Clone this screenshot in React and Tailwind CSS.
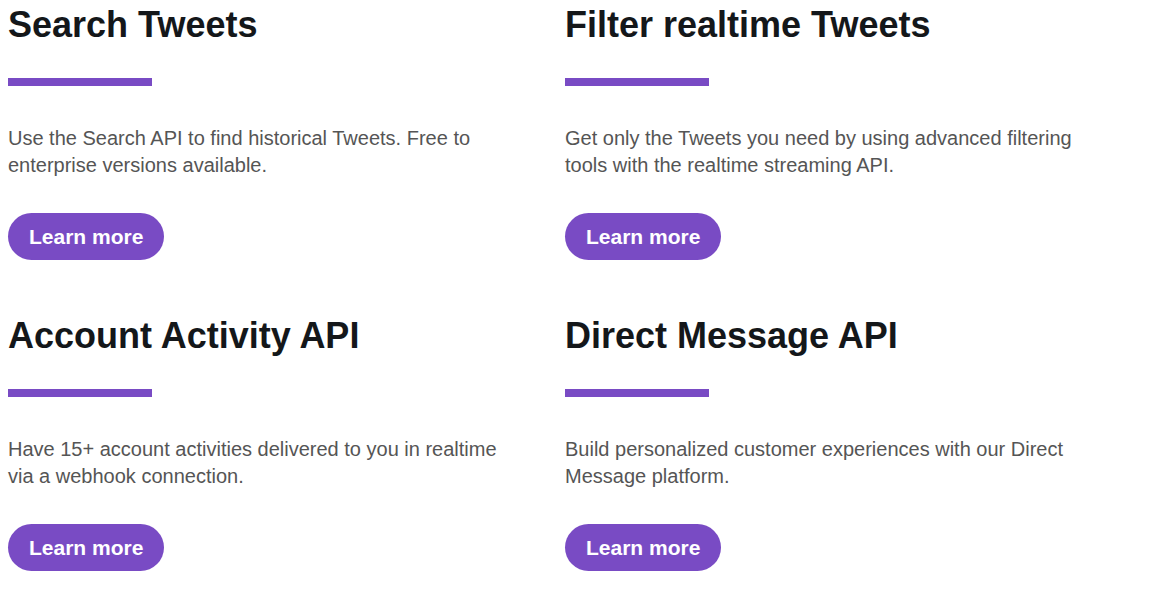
const cards = [
    {
        title: 'Search Tweets',
        text: 'Use the Search API to find historical Tweets. Free to enterprise versions available.',
    },
    {
        title: 'Filter realtime Tweets',
        text: 'Get only the Tweets you need by using advanced filtering tools with the realtime streaming API.',
    },
    {
        title: 'Account Activity API',
        text: 'Have 15+ account activities delivered to you in realtime via a webhook connection.',
    },
    {
        title: 'Direct Message API',
        text: 'Build personalized customer experiences with our Direct Message platform.',
    },
];

function Card({ title, text }) {
    return (
        <div className="flex flex-col items-start">
            <h2 className="text-[36px] leading-[50px] font-bold text-[#14171a]">{title}</h2>
            <div className="mt-[28px] h-2 w-[144px] bg-[#794bc4]" />
            <p className="mt-[39px] max-w-[512px] text-[20px] leading-[27px] text-[#555]">{text}</p>
            <button className="mt-[34px] h-[47px] rounded-full bg-[#794bc4] px-[21px] text-[21px] font-bold text-white">
                Learn more
            </button>
        </div>
    );
}

export default function App() {
    return (
        <div className="min-h-screen bg-white px-2" style={{ fontFamily: '"Liberation Sans", Arial, sans-serif' }}>
            <div className="grid grid-cols-[557px_557px] gap-y-[51px]">
                {cards.map((c) => (
                    <Card key={c.title} {...c} />
                ))}
            </div>
        </div>
    );
}
